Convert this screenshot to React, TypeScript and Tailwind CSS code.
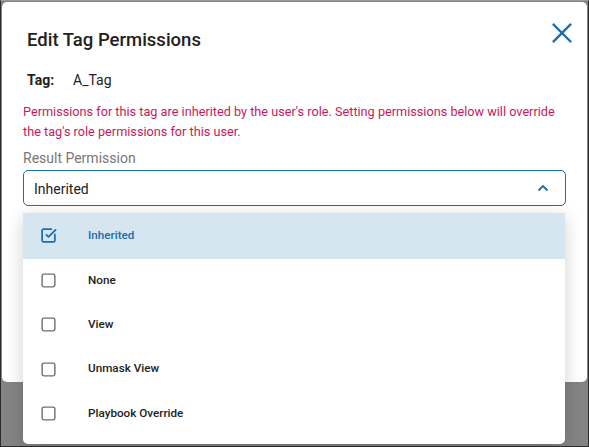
import React from "react";

const BLUE = "#1b6dab";

function CheckedIcon() {
  return (
    <svg width="17" height="17" viewBox="0 0 24 24" fill="none" stroke={BLUE} strokeWidth="2.4" strokeLinecap="round" strokeLinejoin="round">
      <path d="M21 10.5V19a2 2 0 0 1-2 2H5a2 2 0 0 1-2-2V5a2 2 0 0 1 2-2h11" />
      <path d="m9 11 3 3L22 4" />
    </svg>
  );
}

function EmptyBox() {
  return (
    <svg width="17" height="17" viewBox="0 0 24 24" fill="none" stroke="#6f6f6f" strokeWidth="2" strokeLinecap="round" strokeLinejoin="round">
      <rect x="3" y="3" width="18" height="18" rx="2.5" />
    </svg>
  );
}

const items = ["Inherited", "None", "View", "Unmask View", "Playbook Override"];

export default function App() {
  return (
    <div
      className="relative w-[589px] h-[447px] overflow-hidden bg-[#838483] border-l border-r border-b border-l-[#2b2b2b] border-r-[#2b2b2b] border-b-[#2b2b2b] border-t border-t-[#9a9a9a] pt-[1px] px-[1px]"
      style={{ fontFamily: "Roboto, 'Noto Sans', sans-serif" }}
    >
      <div className="relative h-[380px] rounded-[5px] bg-white pl-[21px] pr-[21px]">
        <div className="flex items-start justify-between pt-[26px] pl-[4px]">
          <h1 className="text-[18.5px] leading-[24px] font-medium text-[#222]">Edit Tag Permissions</h1>
          <svg width="22" height="22" viewBox="0 0 24 24" className="mt-[-6px] mr-[-7px]" fill="none" stroke={BLUE} strokeWidth="2.6" strokeLinecap="square">
            <path d="M3 3 21 21M21 3 3 21" />
          </svg>
        </div>
        <div className="mt-[18px] flex items-center pl-[4px] text-[14px] leading-[20px] text-[#222]">
          <span className="w-[46px] font-bold">Tag:</span>
          <span>A_Tag</span>
        </div>
        <p className="mt-[12px] mr-[-4px] text-[12.7px] leading-[19.5px] text-[#c8195c]">
          Permissions for this tag are inherited by the user's role. Setting permissions below will override the tag's role permissions for this user.
        </p>
        <div className="mt-[8px] text-[14px] leading-[18px] text-[#777]">Result Permission</div>
        <div className="mt-[3px] flex h-[36px] items-center justify-between rounded-[5px] border border-[#1b6dab] pl-[10px] pr-[16px]">
          <span className="text-[14px] leading-[20px] pt-[1px] text-[#222]">Inherited</span>
          <svg width="12" height="8" viewBox="0 0 12 8" fill="none" stroke={BLUE} strokeWidth="1.8">
            <path d="M1.5 6.5 6 2l4.5 4.5" />
          </svg>
        </div>
      </div>
      <div className="absolute left-[22px] top-[212px] w-[542px] rounded-[5px] bg-white pb-[8px] shadow-[0_4px_18px_rgba(0,0,0,0.18)]">
        {items.map((it, i) => (
          <div
            key={it}
            className={
              i === 0
                ? "flex h-[45.5px] items-center bg-[#d6e6f0] pl-[17px]"
                : "flex h-[44.25px] items-center pl-[17px]"
            }
          >
            <span className="flex w-[48px]">{i === 0 ? <CheckedIcon /> : <EmptyBox />}</span>
            <span
              className={
                i === 0
                  ? "text-[11.7px] font-medium text-[#1b6dab]"
                  : "text-[11.7px] font-medium text-[#222]"
              }
            >
              {it}
            </span>
          </div>
        ))}
      </div>
    </div>
  );
}
